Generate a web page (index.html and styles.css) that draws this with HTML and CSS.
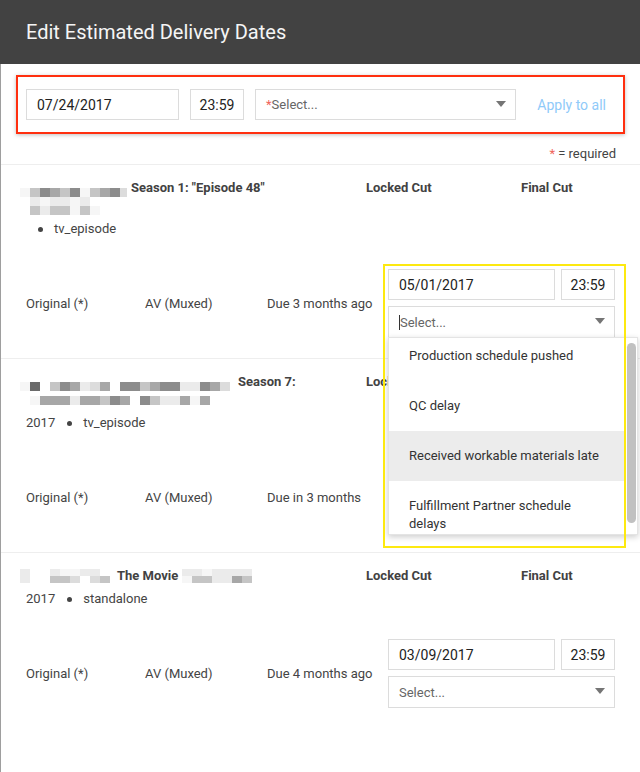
FILE: index.html
```html
<!DOCTYPE html>
<html lang="en">
<head>
    <meta charset="UTF-8">
    <meta name="viewport" content="width=device-width, initial-scale=1.0">
    <title>Edit Estimated Delivery Dates</title>
    <link rel="stylesheet" href="styles.css">
</head>
<body>
    <div class="modal">
        <header class="modal-header">
            <h1>Edit Estimated Delivery Dates</h1>
        </header>

        <div class="modal-body">
            <div class="bulk-bar">
                <input class="field date" type="text" value="07/24/2017">
                <input class="field time" type="text" value="23:59">
                <div class="picker">
                    <span class="req">*</span><span class="placeholder">Select...</span>
                    <span class="caret"></span>
                </div>
                <button class="apply" disabled>Apply to all</button>
            </div>
            <p class="legend"><span class="req">*</span> = required</p>

            <!-- asset 1 -->
            <div class="asset">
                <div class="asset-head">
                    <div class="asset-title">
                        <div class="title-line">
                            <span class="mosaic pull low">
                                <span class="px g0"></span><span class="px g3"></span><span class="px g5"></span><span class="px g4"></span><span class="px g3"></span><span class="px g5"></span><span class="px g0"></span><span class="px g3"></span><span class="px g4"></span><span class="px g5"></span><span class="px g2 narrow"></span>
                            </span>
                            <strong>Season 1: "Episode 48"</strong>
                        </div>
                        <div class="title-line">
                            <span class="mosaic stack inset">
                                <span class="mrow"><span class="px g1"></span><span class="px g0"></span><span class="px g1"></span><span class="px g1"></span><span class="px g0"></span><span class="px g1"></span></span>
                                <span class="mrow"><span class="px g3"></span><span class="px g1"></span><span class="px g3"></span><span class="px g3"></span><span class="px g0"></span><span class="px g3"></span><span class="px g0"></span></span>
                            </span>
                        </div>
                        <div class="meta"><span class="year"></span><span class="dot"></span>tv_episode</div>
                    </div>
                    <div class="cut">Locked Cut</div>
                    <div class="cut">Final Cut</div>
                </div>
                <div class="asset-foot">
                    <span>Original (*)</span>
                    <span>AV (Muxed)</span>
                    <span>Due 3 months ago</span>
                    <div class="editor">
                        <div class="editor-row">
                            <input class="field date" type="text" value="05/01/2017">
                            <input class="field time" type="text" value="23:59">
                        </div>
                        <div class="picker">
                            <span class="cursor"></span><span class="placeholder">Select...</span>
                            <span class="caret"></span>
                        </div>
                        <div class="menu">
                            <ul class="menu-list">
                                <li>Production schedule pushed</li>
                                <li>QC delay</li>
                                <li class="active">Received workable materials late</li>
                                <li>Fulfillment Partner schedule delays</li>
                            </ul>
                            <div class="scrollbar"><span class="thumb"></span></div>
                        </div>
                        <div class="callout"></div>
                    </div>
                </div>
            </div>

            <!-- asset 2 -->
            <div class="asset">
                <div class="asset-head">
                    <div class="asset-title">
                        <div class="title-line">
                            <span class="mosaic pull low">
                                <span class="px g0"></span><span class="px g6"></span><span class="px"></span><span class="px g3"></span><span class="px g5"></span><span class="px g4"></span><span class="px g1"></span><span class="px g2"></span><span class="px g4"></span><span class="px"></span><span class="px g5"></span><span class="px g5"></span><span class="px g3"></span><span class="px g4"></span><span class="px g5"></span><span class="px g5"></span><span class="px g1"></span><span class="px g1"></span><span class="px g5"></span><span class="px g4"></span><span class="px g2"></span>
                            </span>
                            <strong class="wide-gap">Season 7:</strong>
                        </div>
                        <div class="title-line mid">
                            <span class="mosaic inset">
                                <span class="px g0"></span><span class="px g4"></span><span class="px g4"></span><span class="px g4"></span><span class="px g1"></span><span class="px g4"></span><span class="px g4"></span><span class="px g3"></span><span class="px g5"></span><span class="px g4"></span><span class="px"></span><span class="px g5"></span><span class="px g3"></span><span class="px g1"></span><span class="px g1"></span><span class="px g4"></span><span class="px g0"></span><span class="px g4"></span>
                            </span>
                        </div>
                        <div class="meta"><span class="year">2017</span><span class="dot"></span>tv_episode</div>
                    </div>
                    <div class="cut">Locked Cut</div>
                    <div class="cut">Final Cut</div>
                </div>
                <div class="asset-foot">
                    <span>Original (*)</span>
                    <span>AV (Muxed)</span>
                    <span>Due in 3 months</span>
                    <div class="editor">
                        <div class="editor-row">
                            <input class="field date" type="text" value="06/30/2017">
                            <input class="field time" type="text" value="23:59">
                        </div>
                        <div class="picker">
                            <span class="placeholder">Select...</span>
                            <span class="caret"></span>
                        </div>
                    </div>
                </div>
            </div>

            <!-- asset 3 -->
            <div class="asset">
                <div class="asset-head">
                    <div class="asset-title">
                        <div class="title-line mid">
                            <span class="mosaic stack pull">
                                <span class="mrow short"><span class="px g1"></span><span class="px"></span><span class="px"></span><span class="px g1"></span><span class="px g0"></span><span class="px g0"></span><span class="px g1"></span><span class="px g1"></span><span class="px"></span></span>
                                <span class="mrow short"><span class="px g1"></span><span class="px"></span><span class="px"></span><span class="px g3"></span><span class="px g3"></span><span class="px g2"></span><span class="px"></span><span class="px g2"></span><span class="px g3"></span></span>
                            </span>
                            <strong class="movie">The Movie</strong>
                            <span class="mosaic stack after">
                                <span class="mrow short"><span class="px g1"></span><span class="px g1"></span><span class="px g0"></span><span class="px g1"></span><span class="px g1"></span><span class="px g1"></span><span class="px g1"></span></span>
                                <span class="mrow short"><span class="px g0"></span><span class="px g3"></span><span class="px g3"></span><span class="px g1"></span><span class="px g1"></span><span class="px g4"></span><span class="px g3"></span></span>
                            </span>
                        </div>
                        <div class="meta"><span class="year">2017</span><span class="dot"></span>standalone</div>
                    </div>
                    <div class="cut">Locked Cut</div>
                    <div class="cut">Final Cut</div>
                </div>
                <div class="asset-foot">
                    <span>Original (*)</span>
                    <span>AV (Muxed)</span>
                    <span>Due 4 months ago</span>
                    <div class="editor">
                        <div class="editor-row">
                            <input class="field date" type="text" value="03/09/2017">
                            <input class="field time" type="text" value="23:59">
                        </div>
                        <div class="picker">
                            <span class="placeholder">Select...</span>
                            <span class="caret"></span>
                        </div>
                    </div>
                </div>
            </div>
        </div>
    </div>
</body>
</html>
```

FILE: styles.css
```css
:root {
    --header-bg: #424242;
    --text: #444;
    --field-border: #dcdcdc;
    --muted: #666;
    --required: #f0645a;
    --link-disabled: #90caf9;
}

body {
    margin: 0;
    font-family: Roboto, "Liberation Sans", Arial, sans-serif;
    font-size: 13px;
    color: var(--text);
    background-color: #fff;
}

.modal {
    min-height: 100vh;
    display: flex;
    flex-direction: column;
}

.modal-header {
    height: 64px;
    background-color: var(--header-bg);
    display: flex;
    align-items: center;
    padding: 0 26px;
    flex-shrink: 0;
}

.modal-header h1 {
    margin: 0;
    font-size: 20px;
    font-weight: 400;
    color: #f5f5f5;
}

.modal-body {
    flex: 1;
    border-left: 1px solid #9e9e9e;
}

/* bulk edit bar */

.bulk-bar {
    margin: 11px 15px 0 15px;
    border: 2px solid #ff2f0f;
    box-shadow: 0 1px 4px rgba(0, 0, 0, 0.25);
    padding: 12px 17px 12px 8px;
    display: flex;
    align-items: center;
    gap: 11px;
}

.field {
    box-sizing: border-box;
    height: 31px;
    margin: 0;
    border: 1px solid var(--field-border);
    border-radius: 0;
    padding: 0 10px;
    font-family: inherit;
    font-size: 14px;
    color: #222;
    background-color: #fff;
    outline: none;
}

.bulk-bar .date {
    width: 153px;
}

.field.time {
    width: 54px;
    padding: 0;
    text-align: center;
}

.picker {
    box-sizing: border-box;
    height: 32px;
    border: 1px solid var(--field-border);
    display: flex;
    align-items: center;
    padding: 0 9px 0 10px;
    color: var(--muted);
    background-color: #fff;
}

.bulk-bar .picker {
    flex: 1;
    height: 31px;
}

.picker .caret {
    margin-left: auto;
    margin-bottom: 2px;
    width: 0;
    height: 0;
    border-left: 5px solid transparent;
    border-right: 5px solid transparent;
    border-top: 6px solid #757575;
}

.req {
    color: var(--required);
}

.cursor {
    width: 1px;
    height: 15px;
    background-color: #333;
}

.apply {
    margin-left: 10px;
    padding: 0;
    border: none;
    background: none;
    font-family: inherit;
    font-size: 14px;
    color: var(--link-disabled);
}

.legend {
    margin: 11px 24px 1px 0;
    line-height: 18px;
    text-align: right;
}

/* assets */

.asset {
    border-top: 1px solid #eee;
    padding: 14px 26px 20px 25px;
}

.asset-head {
    display: grid;
    grid-template-columns: 340px 155px 1fr;
}

.title-line {
    display: flex;
    align-items: flex-start;
    height: 18px;
    line-height: 18px;
}

.title-line.mid {
    align-items: center;
}

.title-line strong,
.cut {
    font-weight: 700;
    color: #424242;
}

.cut {
    line-height: 18px;
}

.title-line strong {
    margin-left: 4px;
}

.title-line strong.wide-gap {
    margin-left: 8px;
}

.title-line strong.movie {
    margin-left: 7px;
}

.mosaic {
    display: flex;
}

.mosaic.stack {
    flex-direction: column;
}

.mosaic.pull {
    margin-left: -6px;
}

.mosaic.inset {
    margin-left: 4px;
}

.mosaic.low {
    margin-top: 9px;
}

.mosaic.after {
    margin-left: 4px;
}

.mrow {
    display: flex;
}

.px {
    width: 10px;
    height: 9px;
}

.mrow.short .px {
    height: 7px;
}

.px.narrow { width: 7px; }

.g0 { background-color: #f6f6f6; }
.g1 { background-color: #ebebeb; }
.g2 { background-color: #dcdcdc; }
.g3 { background-color: #c5c5c5; }
.g4 { background-color: #a7a7a7; }
.g5 { background-color: #8c8c8c; }
.g6 { background-color: #6a6a6a; }

.meta {
    margin-top: 5px;
    line-height: 18px;
    display: flex;
    align-items: center;
}

.dot {
    width: 5px;
    height: 5px;
    border-radius: 50%;
    background-color: #444;
    margin: 0 11px 0 12px;
}

.asset-foot {
    margin-top: 31px;
    display: grid;
    grid-template-columns: 119px 122px 121px 227px;
    align-items: center;
}

.editor {
    position: relative;
    display: flex;
    flex-direction: column;
    gap: 6px;
}

.editor-row {
    display: flex;
    gap: 6px;
}

.editor-row .date {
    flex: 1;
    width: 0;
}

/* open dropdown */

.menu {
    position: absolute;
    top: 68px;
    left: 0;
    width: 250px;
    height: 198px;
    box-sizing: border-box;
    border: 1px solid #e4e4e4;
    background-color: #fff;
    box-shadow: 0 2px 6px rgba(0, 0, 0, 0.2);
    display: flex;
    overflow: hidden;
    z-index: 2;
}

.menu-list {
    flex: 1;
    list-style: none;
    margin: -7px 0 0 0;
    padding: 0;
}

.menu-list li {
    padding: 16px 20px 16px 20px;
    line-height: 18px;
    color: #333;
}

.menu-list li:last-child {
    padding-bottom: 0;
}

.menu-list li.active {
    background-color: #ececec;
}

.scrollbar {
    width: 11px;
    display: flex;
    justify-content: center;
    padding-top: 5px;
}

.scrollbar .thumb {
    width: 9px;
    height: 180px;
    border-radius: 5px;
    background-color: #c1c1c1;
}

.callout {
    position: absolute;
    top: -5px;
    left: -5px;
    width: 243px;
    height: 284px;
    box-sizing: border-box;
    border: 2px solid #fde910;
    z-index: 3;
    pointer-events: none;
}
```
